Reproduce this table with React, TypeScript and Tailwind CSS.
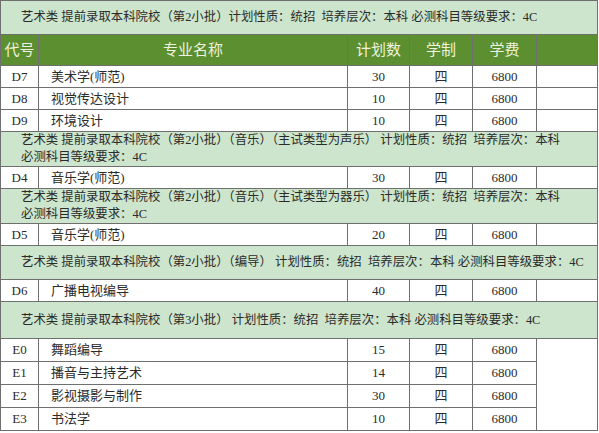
import React from 'react';

type Row = { code: string; name: string; plan: string; years: string; fee: string };

type Block = { title: React.ReactNode; twoLine?: boolean; rows: Row[]; merged?: boolean };

const blocks: Block[] = [
  {
    title: '艺术类 提前录取本科院校（第2小批）计划性质：统招  培养层次：本科 必测科目等级要求：4C',
    rows: [
      { code: 'D7', name: '美术学(师范)', plan: '30', years: '四', fee: '6800' },
      { code: 'D8', name: '视觉传达设计', plan: '10', years: '四', fee: '6800' },
      { code: 'D9', name: '环境设计', plan: '10', years: '四', fee: '6800' },
    ],
  },
  {
    title: (
      <>
        艺术类 提前录取本科院校（第2小批）（音乐）（主试类型为声乐） 计划性质：统招  培养层次：本科
        <br />
        必测科目等级要求：4C
      </>
    ),
    twoLine: true,
    rows: [{ code: 'D4', name: '音乐学(师范)', plan: '30', years: '四', fee: '6800' }],
  },
  {
    title: (
      <>
        艺术类 提前录取本科院校（第2小批）（音乐）（主试类型为器乐） 计划性质：统招  培养层次：本科
        <br />
        必测科目等级要求：4C
      </>
    ),
    twoLine: true,
    rows: [{ code: 'D5', name: '音乐学(师范)', plan: '20', years: '四', fee: '6800' }],
  },
  {
    title: '艺术类 提前录取本科院校（第2小批）（编导） 计划性质：统招  培养层次：本科 必测科目等级要求：4C',
    rows: [{ code: 'D6', name: '广播电视编导', plan: '40', years: '四', fee: '6800' }],
  },
  {
    title: '艺术类 提前录取本科院校（第3小批） 计划性质：统招  培养层次：本科 必测科目等级要求：4C',
    merged: true,
    rows: [
      { code: 'E0', name: '舞蹈编导', plan: '15', years: '四', fee: '6800' },
      { code: 'E1', name: '播音与主持艺术', plan: '14', years: '四', fee: '6800' },
      { code: 'E2', name: '影视摄影与制作', plan: '30', years: '四', fee: '6800' },
      { code: 'E3', name: '书法学', plan: '10', years: '四', fee: '6800' },
    ],
  },
];

const cell = 'border border-[#6f6f6f]';

export default function App() {
  return (
    <div
      className="w-[599px] h-[433px] overflow-hidden bg-white text-[#2b2b2b]"
      style={{ fontFamily: '"Liberation Serif", "Noto Sans CJK SC", serif' }}
    >
      <table className="w-[598px] table-fixed border-collapse text-[13px]">
        <colgroup>
          <col className="w-[38px]" />
          <col className="w-[309px]" />
          <col className="w-[62px]" />
          <col className="w-[63px]" />
          <col className="w-[64px]" />
          <col />
        </colgroup>
        <tbody>
          {blocks.map((b, bi) => (
            <React.Fragment key={bi}>
              <tr className={b.twoLine ? 'h-[35px]' : bi === 4 ? 'h-[37px]' : 'h-[34px]'}>
                <td
                  colSpan={6}
                  className={`${cell} bg-[#cde5cc] pl-[20px] pr-0 text-[12.4px] leading-[17px] whitespace-pre`}
                >
                  {b.title}
                </td>
              </tr>
              {bi === 0 && (
                <tr className="h-[31px] bg-[#5b8f2f] text-[15px] text-[#eef2df]">
                  <td className={`${cell} text-center`}>代号</td>
                  <td className={`${cell} text-center`}>专业名称</td>
                  <td className={`${cell} text-center`}>计划数</td>
                  <td className={`${cell} text-center`}>学制</td>
                  <td className={`${cell} text-center`}>学费</td>
                  <td className={cell}></td>
                </tr>
              )}
              {b.rows.map((r, ri) => (
                <tr key={r.code} className={bi === 4 ? 'h-[23px]' : 'h-[22px]'}>
                  <td className={`${cell} text-center`}>{r.code}</td>
                  <td className={`${cell} pl-[12px]`}>{r.name}</td>
                  <td className={`${cell} text-center`}>{r.plan}</td>
                  <td className={`${cell} text-center`}>{r.years}</td>
                  <td className={`${cell} text-center`}>{r.fee}</td>
                  {b.merged ? (
                    ri === 0 && <td rowSpan={b.rows.length} className={cell}></td>
                  ) : (
                    <td className={cell}></td>
                  )}
                </tr>
              ))}
            </React.Fragment>
          ))}
        </tbody>
      </table>
    </div>
  );
}
